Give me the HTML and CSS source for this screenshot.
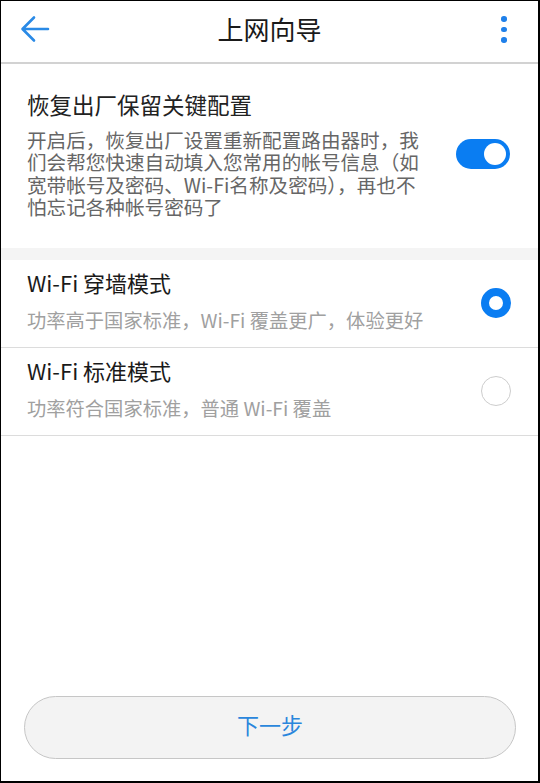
FILE: index.html
```html
<!DOCTYPE html>
<html lang="zh-CN">
<head>
<meta charset="utf-8">
<title>上网向导</title>
<link rel="stylesheet" href="styles.css">
</head>
<body>
<div class="frame">
  <header class="topbar">
    <div class="back">
      <svg width="30" height="28" viewBox="0 0 30 28"><path d="M28 14 H3 M14 2.5 L2.5 14 L14 25.5" fill="none" stroke="#2a8ae6" stroke-width="2.6" stroke-linecap="round" stroke-linejoin="round"/></svg>
    </div>
    <h1 class="title">上网向导</h1>
    <div class="more">
      <span class="dot"></span><span class="dot"></span><span class="dot"></span>
    </div>
  </header>

  <section class="keep">
    <div class="keep-text">
      <div class="keep-title">恢复出厂保留关键配置</div>
      <div class="keep-desc">开启后，恢复出厂设置重新配置路由器时，我们会帮您快速自动填入您常用的帐号信息（如宽带帐号及密码、Wi-Fi名称及密码），再也不怕忘记各种帐号密码了</div>
    </div>
    <div class="toggle on"><span class="knob"></span></div>
  </section>

  <div class="band"></div>

  <div class="item">
    <div class="item-text">
      <div class="item-title">Wi-Fi 穿墙模式</div>
      <div class="item-sub">功率高于国家标准，Wi-Fi 覆盖更广，体验更好</div>
    </div>
    <span class="radio checked"></span>
  </div>
  <div class="item">
    <div class="item-text">
      <div class="item-title">Wi-Fi 标准模式</div>
      <div class="item-sub">功率符合国家标准，普通 Wi-Fi 覆盖</div>
    </div>
    <span class="radio"></span>
  </div>

  <div class="spacer"></div>

  <div class="footer">
    <button class="next">下一步</button>
  </div>
</div>
</body>
</html>
```

FILE: styles.css
```css
* { box-sizing: border-box; }
html, body { margin: 0; padding: 0; background: #fff; }
body {
  font-family: "Noto Sans CJK SC", "Noto Sans", "Liberation Sans", sans-serif;
}
.frame {
  width: 540px;
  height: 783px;
  border-style: solid;
  border-color: #000;
  border-width: 1px 2px 2px 1px;
  display: flex;
  flex-direction: column;
  background: #fff;
}
.topbar {
  height: 63px;
  flex: none;
  border-bottom: 2px solid #d2d2d2;
  display: grid;
  grid-template-columns: 1fr auto 1fr;
  align-items: center;
}
.back { display: flex; align-items: center; padding: 0 0 6px 19px; }
.title {
  margin: 0;
  font-size: 26px;
  font-weight: 400;
  color: #1a1a1a;
  line-height: 34px;
  padding-bottom: 6px;
}
.more {
  justify-self: end;
  width: 20px;
  margin-right: 24px;
  display: flex;
  flex-direction: column;
  align-items: center;
  gap: 5px;
  padding-bottom: 4px;
}
.dot { width: 5.5px; height: 5.5px; border-radius: 50%; background: #1f80ea; }

.keep {
  flex: none;
  display: flex;
  align-items: center;
  justify-content: space-between;
  padding: 25px 28px 29px 26px;
}
.keep-text { width: 400px; }
.keep-title {
  font-size: 22.5px;
  line-height: 30px;
  color: #222;
}
.keep-desc {
  margin-top: 10px;
  font-size: 19.6px;
  line-height: 22.4px;
  color: #666;
}
.toggle {
  width: 54px;
  height: 30px;
  border-radius: 15px;
  background: #0a7df2;
  display: flex;
  align-items: center;
  justify-content: flex-end;
  padding-right: 4px;
  flex: none;
}
.knob { width: 22px; height: 22px; border-radius: 50%; background: #fff; }

.band { height: 12px; flex: none; background: #f4f4f4; }

.item {
  flex: none;
  height: 88px;
  display: flex;
  align-items: center;
  justify-content: space-between;
  padding: 0 27px 0 26px;
  border-bottom: 1px solid #dcdcdc;
}
.item-text { padding-bottom: 7px; }
.item-title {
  font-size: 22px;
  line-height: 28px;
  color: #1a1a1a;
}
.item-sub {
  margin-top: 12px;
  font-size: 19.3px;
  line-height: 24px;
  color: #a0a0a0;
}
.radio {
  width: 30px;
  height: 30px;
  border-radius: 50%;
  border: 1.5px solid #cdcdcd;
  flex: none;
}
.radio.checked { border: 8px solid #0a7df2; }

.spacer { flex: 1; }
.footer { flex: none; padding: 0 22px 22px 23px; }
.next {
  display: block;
  width: 100%;
  height: 63px;
  border-radius: 32px;
  border: 1px solid #c6c6c6;
  background: #f3f3f3;
  color: #2a86dc;
  font-family: "Noto Sans CJK SC", "Noto Sans", sans-serif;
  font-size: 22px;
  padding: 0 0 7px 0;
}
```
